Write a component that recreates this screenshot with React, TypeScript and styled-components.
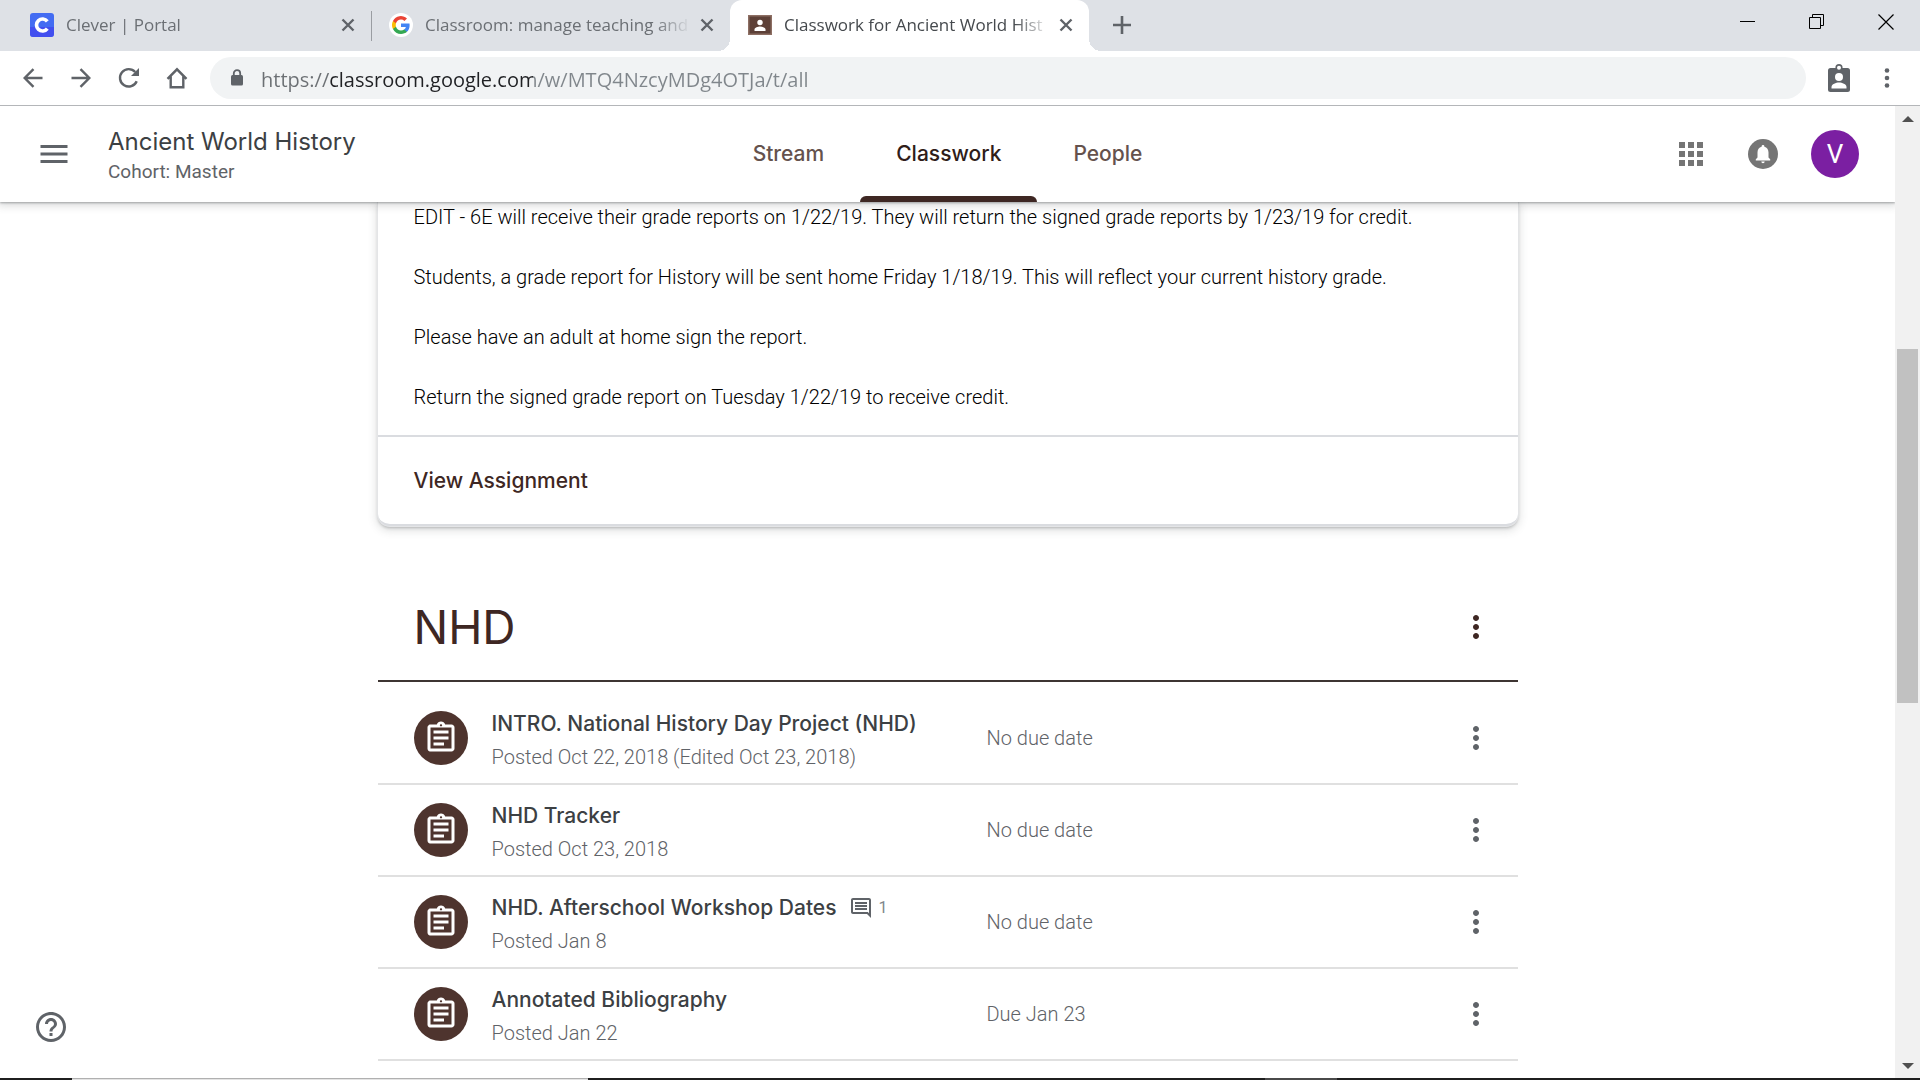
import React from 'react';
import styled, { createGlobalStyle } from 'styled-components';

const productFont = 'Inter, "Liberation Sans", sans-serif';
const bodyFont = 'Roboto, "Liberation Sans", sans-serif';
const systemFont = '"Open Sans", "Noto Sans", sans-serif';

const Global = createGlobalStyle`
  *, *::before, *::after { box-sizing: border-box; }
  body { margin: 0; background: #fff; }
  button { font: inherit; color: inherit; background: none; border: 0; padding: 0; margin: 0; cursor: pointer; }
  a { color: inherit; text-decoration: none; }
  h1, h2, h3, p, ul { margin: 0; padding: 0; font-weight: inherit; }
  svg { display: block; flex: none; }
`;

const Window = styled.div`
  height: 100vh;
  display: flex;
  flex-direction: column;
  overflow: hidden;
  background: #fff;
  font-family: ${bodyFont};
`;

const IconButton = styled.button<{ $size?: number; $color?: string }>`
  flex: none;
  width: ${(p) => p.$size ?? 48}px;
  height: ${(p) => p.$size ?? 48}px;
  display: flex;
  align-items: center;
  justify-content: center;
  color: ${(p) => p.$color ?? '#5f6368'};
`;

/* ---- Browser tabs ---- */

const TabStrip = styled.div`
  flex: none;
  height: 51px;
  display: flex;
  align-items: center;
  padding-left: 12px;
  background: #dee1e6;
  font-family: ${systemFont};
`;

const Tab = styled.div<{ $active?: boolean }>`
  position: relative;
  flex: 0 1 359px;
  min-width: 0;
  height: 100%;
  display: flex;
  align-items: center;
  padding: 0 11px 2px 18px;
  border-radius: 12px 12px 0 0;
  background: ${(p) => (p.$active ? '#fff' : 'transparent')};
  color: ${(p) => (p.$active ? '#45494d' : '#6b6f74')};

  &::before,
  &::after {
    content: '';
    display: ${(p) => (p.$active ? 'block' : 'none')};
    position: absolute;
    bottom: 0;
    width: 12px;
    height: 12px;
  }
  &::before {
    right: 100%;
    background: radial-gradient(circle at 0 0, transparent 12px, #fff 12px);
  }
  &::after {
    left: 100%;
    background: radial-gradient(circle at 100% 0, transparent 12px, #fff 12px);
  }
`;

const TabDivider = styled.div`
  flex: none;
  width: 1px;
  height: 30px;
  margin-right: -1px;
  background: #9a9da2;
`;

const TabTitle = styled.span`
  flex: 1;
  min-width: 0;
  margin: 0 4px 0 12px;
  overflow: hidden;
  white-space: nowrap;
  font-size: 17px;
  line-height: 24px;
  mask-image: linear-gradient(to right, #000 calc(100% - 36px), transparent);
`;

const NewTab = styled(IconButton)`
  margin: 0 0 2px 17px;
`;

const WindowControls = styled.div`
  align-self: flex-start;
  display: flex;
  margin-left: auto;
`;

const WindowButton = styled.button`
  width: 69px;
  height: 43px;
  display: flex;
  align-items: center;
  justify-content: center;
`;

/* ---- Browser toolbar ---- */

const Toolbar = styled.div`
  flex: none;
  height: 55px;
  display: flex;
  align-items: center;
  gap: 9px;
  padding: 0 9px;
  border-bottom: 1px solid #b4b6b9;
`;

const ButtonGroup = styled.div`
  display: flex;
`;

const AddressBar = styled.label`
  flex: 1;
  height: 42px;
  display: flex;
  align-items: center;
  gap: 17px;
  padding: 0 20px;
  border-radius: 21px;
  background: #f1f3f4;
  color: #5f6368;
`;

const AddressInput = styled.input`
  flex: 1;
  min-width: 0;
  height: 34px;
  padding: 2px 0 0;
  border: 0;
  outline: 0;
  font: 400 20px/32px ${systemFont};
  color: transparent;
  background: linear-gradient(to right, #6b6f73 68px, #202124 68px, #202124 272px, #80868b 272px);
  background-clip: text;
  -webkit-background-clip: text;
`;

/* ---- Page ---- */

const Page = styled.div`
  flex: 1;
  min-height: 0;
  display: flex;
`;

const Viewport = styled.div`
  position: relative;
  flex: 1;
  min-width: 0;
  display: flex;
  flex-direction: column;
  overflow: hidden;
`;

const Header = styled.header`
  position: relative;
  z-index: 1;
  flex: none;
  height: 96px;
  display: grid;
  grid-template-columns: 1fr auto 1fr;
  background: #fff;
  box-shadow: 0 1px 2px rgba(60, 64, 67, 0.4), 0 2px 8px 2px rgba(60, 64, 67, 0.18);
`;

const HeaderStart = styled.div`
  display: flex;
  align-items: center;
  gap: 30px;
  padding-left: 30px;
`;

const CourseHeading = styled.div`
  padding-top: 6px;
`;

const CourseName = styled.h1`
  font: 400 24px/30px ${productFont};
  color: #3c4043;
`;

const CourseSection = styled.p`
  font-size: 19px;
  line-height: 30px;
  color: #5f6368;
`;

const Nav = styled.nav`
  display: flex;
`;

const NavLink = styled.a<{ $active?: boolean }>`
  display: flex;
  align-items: center;
  padding: 0 36px;
  font: 500 21px/30px ${productFont};
  color: ${(p) => (p.$active ? '#2f1d1a' : '#65524d')};
  position: relative;

  &::after {
    content: '';
    display: ${(p) => (p.$active ? 'block' : 'none')};
    position: absolute;
    left: 0;
    right: 0;
    bottom: 0;
    height: 6px;
    border-radius: 6px 6px 0 0;
    background: #3e2723;
  }
`;

const HeaderEnd = styled.div`
  display: flex;
  align-items: center;
  justify-content: flex-end;
  gap: 24px;
  padding-right: 36px;
`;

const Profile = styled.button`
  width: 48px;
  height: 48px;
  border-radius: 50%;
  background: #7b1fa2;
  color: #fff;
  font-size: 26px;
`;

const Content = styled.main`
  flex: 1;
  min-height: 0;
  overflow: hidden;
  padding: 0 24px;
`;

const Column = styled.div`
  max-width: 1140px;
  margin: 0 auto;
`;

const Card = styled.article`
  border-radius: 0 0 12px 12px;
  border-bottom: 2px solid #dadce0;
  box-shadow: 0 0 0 1px #e4e5e7, 0 2px 3px rgba(60, 64, 67, 0.3), 0 3px 9px 2px rgba(60, 64, 67, 0.15);
  background: #fff;
`;

const CardBody = styled.div`
  display: grid;
  gap: 30px;
  padding: 0 36px 23px;
  font-size: 20px;
  line-height: 30px;
  font-weight: 350;
  color: #000;
`;

const CardFooter = styled.div`
  display: flex;
  align-items: center;
  height: 89px;
  padding: 0 36px;
  border-top: 2px solid #dadce0;
  font: 500 21px/30px ${productFont};
  color: #3e2723;
`;

const TopicHeader = styled.header`
  display: flex;
  align-items: center;
  justify-content: space-between;
  height: 110px;
  margin-top: 46px;
  padding: 2px 18px 0 36px;
  border-bottom: 2px solid #3e3532;
`;

const TopicName = styled.h2`
  font: 400 46px/60px ${productFont};
  color: #3e2723;
`;

const Items = styled.ul`
  list-style: none;
  padding-top: 11px;
`;

const Item = styled.li`
  display: flex;
  align-items: center;
  height: 92px;
  padding: 0 18px 0 36px;
  border-bottom: 2px solid #e0e0e0;
`;

const ItemBadge = styled.span`
  flex: none;
  width: 54px;
  height: 54px;
  margin-right: 24px;
  display: flex;
  align-items: center;
  justify-content: center;
  border-radius: 50%;
  background: #4e342e;
  color: #fff;
`;

const ItemText = styled.div`
  flex: 495 1 0;
  min-width: 0;
  padding-top: 4px;
`;

const ItemTitle = styled.h3`
  display: flex;
  align-items: center;
  gap: 12px;
  font: 500 21px/34px ${productFont};
  color: #3c4043;
`;

const Comments = styled.span`
  display: flex;
  align-items: center;
  gap: 6px;
  font: 400 16px/24px ${bodyFont};
  color: #80868b;

  svg { color: #5f6368; }
`;

const ItemMeta = styled.p`
  font-size: 20px;
  line-height: 32px;
  font-weight: 300;
  color: #5f6368;
`;

const ItemDue = styled(ItemMeta)`
  flex: 465 1 0;
`;

const HelpButton = styled(IconButton)`
  position: absolute;
  left: 27px;
  bottom: 27px;
`;

/* ---- Scrollbar ---- */

const Scrollbar = styled.div`
  flex: none;
  width: 25px;
  display: flex;
  flex-direction: column;
  align-items: center;
  background: #f1f1f1;
`;

const Track = styled.div`
  flex: 1;
  width: 21px;
  display: grid;
  grid-template-rows: 218fr 354fr 350fr;
`;

const Thumb = styled.div`
  grid-row: 2;
  background: #c1c1c1;
`;

const TaskbarEdge = styled.div`
  flex: none;
  height: 2px;
  display: grid;
  grid-template-columns: 72px 516px 677px 72px 1fr;
  background: #1f1f1f;
`;

const EdgeSegment = styled.span<{ $column: number; $color: string; $line?: string }>`
  grid-column: ${(p) => p.$column};
  background: ${(p) => p.$color};
  border-top: 1px solid ${(p) => p.$line ?? p.$color};
`;

/* ---- Icons ---- */

function Icon({ d, size = 36 }: { d: string; size?: number }) {
  return (
    <svg width={size} height={size} viewBox="0 0 24 24" fill="currentColor" aria-hidden="true">
      <path d={d} />
    </svg>
  );
}

const paths = {
  menu: 'M3 18h18v-2H3v2zm0-5h18v-2H3v2zm0-7v2h18V6H3z',
  apps: 'M4 8h4V4H4v4zm6 12h4v-4h-4v4zm-6 0h4v-4H4v4zm0-6h4v-4H4v4zm6 0h4v-4h-4v4zm6-10v4h4V4h-4zm-6 4h4V4h-4v4zm6 6h4v-4h-4v4zm0 6h4v-4h-4v4z',
  more: 'M12 8c1.1 0 2-.9 2-2s-.9-2-2-2-2 .9-2 2 .9 2 2 2zm0 2c-1.1 0-2 .9-2 2s.9 2 2 2 2-.9 2-2-.9-2-2-2zm0 6c-1.1 0-2 .9-2 2s.9 2 2 2 2-.9 2-2-.9-2-2-2z',
  assignment:
    'M7 15h7v2H7zm0-4h10v2H7zm0-4h10v2H7zm12-4h-4.18C14.4 1.84 13.3 1 12 1c-1.3 0-2.4.84-2.82 2H5c-.14 0-.27.01-.4.04-.39.08-.74.28-1.01.55-.18.18-.33.4-.43.64-.1.23-.16.49-.16.77v14c0 .27.06.54.16.78s.25.45.43.64c.27.27.62.47 1.01.55.13.02.26.03.4.03h14c1.1 0 2-.9 2-2V5c0-1.1-.9-2-2-2zm-7-.25c.41 0 .75.34.75.75s-.34.75-.75.75-.75-.34-.75-.75.34-.75.75-.75zM19 19H5V5h14v14z',
  comment:
    'M21.99 4c0-1.1-.89-2-1.99-2H4c-1.1 0-2 .9-2 2v12c0 1.1.9 2 2 2h14l4 4-.01-18zM20 4v13.17L18.83 16H4V4h16zM6 12h12v2H6zm0-3h12v2H6zm0-3h12v2H6z',
  help: 'M11 18h2v-2h-2v2zm1-16C6.48 2 2 6.48 2 12s4.48 10 10 10 10-4.48 10-10S17.52 2 12 2zm0 18c-4.41 0-8-3.59-8-8s3.59-8 8-8 8 3.59 8 8-3.59 8-8 8zm0-14c-2.21 0-4 1.79-4 4h2c0-1.1.9-2 2-2s2 .9 2 2c0 2-3 1.75-3 5h2c0-2.25 3-2.5 3-5 0-2.21-1.79-4-4-4z',
};

const CloseGlyph = () => (
  <svg width="14" height="14" viewBox="0 0 14 14" stroke="currentColor" strokeWidth="2.4" aria-hidden="true">
    <path d="M1.5 1.5l11 11M12.5 1.5l-11 11" />
  </svg>
);

const CleverLogo = () => (
  <svg width="24" height="24" viewBox="0 0 24 24" aria-hidden="true">
    <rect width="24" height="24" rx="3" fill="#436cf2" />
    <path d="M0 14h24v7a3 3 0 0 1-3 3H3a3 3 0 0 1-3-3z" fill="#4243ee" opacity=".7" />
    <path d="M17.3 8.4A6 6 0 1 0 17.3 15.6" fill="none" stroke="#fff" strokeWidth="3.6" />
  </svg>
);

const GoogleLogo = () => (
  <svg width="24" height="24" viewBox="0 0 24 24" aria-hidden="true">
    <circle cx="12" cy="12" r="12" fill="#fff" />
    <g transform="translate(3 3) scale(.75)">
      <path fill="#4285F4" d="M23.5 12.3c0-.8-.1-1.6-.2-2.3H12v4.5h6.5a5.6 5.6 0 0 1-2.4 3.6v3h3.9c2.2-2.1 3.5-5.2 3.5-8.8z" />
      <path fill="#34A853" d="M12 24c3.2 0 6-1.1 8-2.9l-3.9-3c-1.1.7-2.5 1.2-4.1 1.2-3.1 0-5.8-2.1-6.7-5H1.3v3.1A12 12 0 0 0 12 24z" />
      <path fill="#FBBC05" d="M5.3 14.3a7.2 7.2 0 0 1 0-4.6V6.6h-4a12 12 0 0 0 0 10.8z" />
      <path fill="#EA4335" d="M12 4.8c1.8 0 3.3.6 4.6 1.8l3.4-3.4A12 12 0 0 0 1.3 6.6l4 3.1c.9-2.8 3.6-4.9 6.7-4.9z" />
    </g>
  </svg>
);

const ClassroomLogo = () => (
  <svg width="24" height="24" viewBox="0 0 24 24" aria-hidden="true">
    <rect y="2" width="24" height="20" fill="#8d6e63" />
    <rect x="1.5" y="3.5" width="21" height="17" fill="#5d4037" />
    <circle cx="12" cy="9.5" r="2.7" fill="#fff" />
    <path d="M6.5 18v-1.500c0-2 3.500-3 5.500-3s5.500 1 5.500 3V18z" fill="#fff" />
  </svg>
);

const strokeProps = { fill: 'none', stroke: 'currentColor', strokeWidth: 2.4, 'aria-hidden': true } as const;

const BackGlyph = () => (
  <svg width="20" height="20" viewBox="0 0 20 20" {...strokeProps}>
    <path d="M19.5 10H2M10.5 1.2L1.7 10l8.8 8.8" />
  </svg>
);

const ForwardGlyph = () => (
  <svg width="20" height="20" viewBox="0 0 20 20" {...strokeProps}>
    <path d="M.5 10H18M9.5 1.2l8.8 8.8-8.8 8.8" />
  </svg>
);

const ReloadGlyph = () => (
  <svg width="22" height="22" viewBox="0 0 22 22" {...strokeProps}>
    <path d="M18.7 14.2A8.7 8.7 0 1 1 17.2 5" />
    <path d="M21 1v8h-8z" fill="currentColor" stroke="none" />
  </svg>
);

const HomeGlyph = () => (
  <svg width="22" height="22" viewBox="0 0 22 22" {...strokeProps}>
    <path d="M1.5 11.8L11 2.3l9.5 9.5M4.7 9.5v10.8h12.6V9.5" />
  </svg>
);

const LockGlyph = () => (
  <svg width="14" height="18" viewBox="0 0 14 18" aria-hidden="true">
    <rect x="1" y="6" width="12" height="10.5" rx="1.5" fill="currentColor" />
    <path d="M3.8 7V4.3a3.2 3.2 0 0 1 6.4 0V7" fill="none" stroke="currentColor" strokeWidth="1.8" />
  </svg>
);

const BadgeGlyph = () => (
  <svg width="24" height="30" viewBox="0 0 24 30" aria-hidden="true">
    <rect x="1" y="5" width="22" height="24" rx="2.5" fill="#5f6368" />
    <circle cx="12" cy="4.7" r="2.8" fill="#fff" stroke="#5f6368" strokeWidth="1.6" />
    <circle cx="12" cy="14" r="4" fill="#fff" />
    <path d="M4.5 25.5V24c0-3 4.5-4.5 7.5-4.500s7.500 1.500 7.500 4.500v1.500z" fill="#fff" />
  </svg>
);

const DotsGlyph = () => (
  <svg width="6" height="20" viewBox="0 0 6 20" fill="#5f6368" aria-hidden="true">
    <circle cx="3" cy="2.5" r="2.3" />
    <circle cx="3" cy="10" r="2.3" />
    <circle cx="3" cy="17.5" r="2.3" />
  </svg>
);

const BellGlyph = () => (
  <svg width="30" height="30" viewBox="0 0 30 30" aria-hidden="true">
    <circle cx="15" cy="15" r="15" fill="#757575" />
    <path d="M7.8 21.5v-1.3l1.7-1.7v-5c0-2.9 1.5-5.1 4.1-5.8v-.3a1.4 1.4 0 0 1 2.8 0v.3c2.6.7 4.1 2.9 4.1 5.8v5l1.7 1.7v1.3z" fill="#fff" />
    <path d="M13.3 22.6h3.4a1.7 1.7 0 0 1-3.4 0z" fill="#fff" />
  </svg>
);

const ArrowGlyph = ({ down }: { down?: boolean }) => (
  <svg width="12" height="6" viewBox="0 0 12 6" fill="#505050" aria-hidden="true">
    <path d={down ? 'M0 0h12L6 6z' : 'M0 6h12L6 0z'} />
  </svg>
);

/* ---- Data ---- */

const announcement = [
  'EDIT - 6E will receive their grade reports on 1/22/19. They will return the signed grade reports by 1/23/19 for credit.',
  'Students, a grade report for History will be sent home Friday 1/18/19. This will reflect your current history grade.',
  'Please have an adult at home sign the report.',
  'Return the signed grade report on Tuesday 1/22/19 to receive credit.',
];

const items = [
  { title: 'INTRO. National History Day Project (NHD)', posted: 'Posted Oct 22, 2018 (Edited Oct 23, 2018)', due: 'No due date' },
  { title: 'NHD Tracker', posted: 'Posted Oct 23, 2018', due: 'No due date' },
  { title: 'NHD. Afterschool Workshop Dates', posted: 'Posted Jan 8', due: 'No due date', comments: 1 },
  { title: 'Annotated Bibliography', posted: 'Posted Jan 22', due: 'Due Jan 23' },
];

export default function App() {
  return (
    <Window>
      <Global />
      <TabStrip>
        <Tab>
          <CleverLogo />
          <TabTitle>Clever | Portal</TabTitle>
          <IconButton $size={24} aria-label="Close tab"><CloseGlyph /></IconButton>
        </Tab>
        <TabDivider />
        <Tab>
          <GoogleLogo />
          <TabTitle>Classroom: manage teaching and</TabTitle>
          <IconButton $size={24} aria-label="Close tab"><CloseGlyph /></IconButton>
        </Tab>
        <Tab $active>
          <ClassroomLogo />
          <TabTitle>Classwork for Ancient World Hist</TabTitle>
          <IconButton $size={24} aria-label="Close tab"><CloseGlyph /></IconButton>
        </Tab>
        <NewTab $size={32} aria-label="New tab">
          <svg width="18" height="18" viewBox="0 0 18 18" stroke="currentColor" strokeWidth="2.6" aria-hidden="true">
            <path d="M9 0v18M0 9h18" />
          </svg>
        </NewTab>
        <WindowControls>
          <WindowButton aria-label="Minimize">
            <svg width="16" height="16" viewBox="0 0 16 16" aria-hidden="true"><path d="M0 7h15v1H0z" /></svg>
          </WindowButton>
          <WindowButton aria-label="Restore">
            <svg width="16" height="16" viewBox="0 0 16 16" fill="none" stroke="#000" aria-hidden="true">
              <path d="M.5 3.5h11v11H.5zM3.5 3.5v-3h11v11h-3" />
            </svg>
          </WindowButton>
          <WindowButton aria-label="Close">
            <svg width="16" height="16" viewBox="0 0 16 16" stroke="#000" strokeWidth="1.2" aria-hidden="true">
              <path d="M.5.5l15 15M15.5.5l-15 15" />
            </svg>
          </WindowButton>
        </WindowControls>
      </TabStrip>

      <Toolbar>
        <ButtonGroup>
          <IconButton aria-label="Back"><BackGlyph /></IconButton>
          <IconButton aria-label="Forward"><ForwardGlyph /></IconButton>
          <IconButton aria-label="Reload"><ReloadGlyph /></IconButton>
          <IconButton aria-label="Home"><HomeGlyph /></IconButton>
        </ButtonGroup>
        <AddressBar>
          <LockGlyph />
          <AddressInput type="text" aria-label="Address" defaultValue="https://classroom.google.com/w/MTQ4NzcyMDg4OTJa/t/all" />
        </AddressBar>
        <ButtonGroup>
          <IconButton aria-label="Extension"><BadgeGlyph /></IconButton>
          <IconButton aria-label="Browser menu"><DotsGlyph /></IconButton>
        </ButtonGroup>
      </Toolbar>

      <Page>
        <Viewport>
          <Header>
            <HeaderStart>
              <IconButton aria-label="Main menu"><Icon d={paths.menu} /></IconButton>
              <CourseHeading>
                <CourseName>Ancient World History</CourseName>
                <CourseSection>Cohort: Master</CourseSection>
              </CourseHeading>
            </HeaderStart>
            <Nav>
              <NavLink href="#stream">Stream</NavLink>
              <NavLink href="#classwork" $active aria-current="page">Classwork</NavLink>
              <NavLink href="#people">People</NavLink>
            </Nav>
            <HeaderEnd>
              <IconButton $color="#757575" aria-label="Apps"><Icon d={paths.apps} /></IconButton>
              <IconButton aria-label="Notifications"><BellGlyph /></IconButton>
              <Profile aria-label="Account">V</Profile>
            </HeaderEnd>
          </Header>

          <Content>
            <Column>
              <Card>
                <CardBody>
                  {announcement.map((line) => <p key={line}>{line}</p>)}
                </CardBody>
                <CardFooter>
                  <a href="#assignment">View Assignment</a>
                </CardFooter>
              </Card>

              <section>
                <TopicHeader>
                  <TopicName>NHD</TopicName>
                  <IconButton $color="#3e2723" aria-label="Topic options"><Icon d={paths.more} /></IconButton>
                </TopicHeader>
                <Items>
                  {items.map((item) => (
                    <Item key={item.title}>
                      <ItemBadge><Icon d={paths.assignment} /></ItemBadge>
                      <ItemText>
                        <ItemTitle>
                          {item.title}
                          {item.comments && (
                            <Comments><Icon d={paths.comment} size={24} />{item.comments}</Comments>
                          )}
                        </ItemTitle>
                        <ItemMeta>{item.posted}</ItemMeta>
                      </ItemText>
                      <ItemDue>{item.due}</ItemDue>
                      <IconButton aria-label="Item options"><Icon d={paths.more} /></IconButton>
                    </Item>
                  ))}
                </Items>
              </section>
            </Column>
          </Content>
          <HelpButton aria-label="Help"><Icon d={paths.help} /></HelpButton>
        </Viewport>

        <Scrollbar>
          <IconButton $size={25} aria-label="Scroll up"><ArrowGlyph /></IconButton>
          <Track><Thumb /></Track>
          <IconButton $size={25} aria-label="Scroll down"><ArrowGlyph down /></IconButton>
        </Scrollbar>
      </Page>

      <TaskbarEdge>
        <EdgeSegment $column={2} $color="#e4e4e4" $line="#b0b0b0" />
        <EdgeSegment $column={4} $color="#4a4a4a" />
      </TaskbarEdge>
    </Window>
  );
}
